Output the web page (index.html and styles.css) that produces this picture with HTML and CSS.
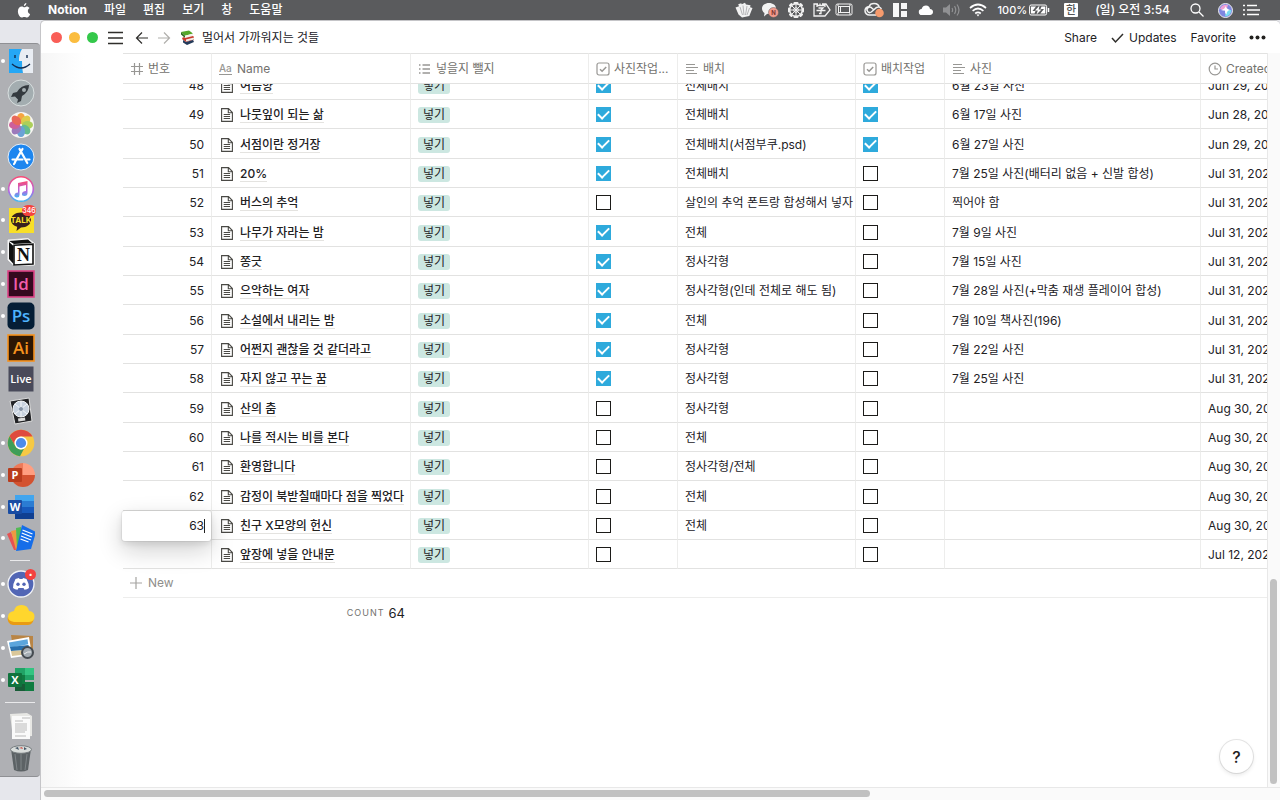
FILE: index.html
```html
<!DOCTYPE html>
<html lang="ko">
<head>
<meta charset="utf-8">
<title>멀어서 가까워지는 것들</title>
<link rel="stylesheet" href="styles.css">
</head>
<body>
<svg class="defs" aria-hidden="true">
  <symbol id="page" viewBox="0 0 12 14"><path d="M.6.6h6.9l3.9 3.9v8.9H.6zM7.3.6v4.1h4.1" fill="none" stroke="#4a4945" stroke-width="1.1"/><path d="M2.700 6.500h6.400M2.700 8.500h6.400M2.700 10.500h6.400" stroke="#4a4945"/></symbol>
  <symbol id="check" viewBox="0 0 14 14"><rect x="1" y="1" width="12" height="12" rx="2" fill="none" stroke="#989794" stroke-width="1.2"/><path d="M4 7.2l2.1 2.1L10.2 5" fill="none" stroke="#989794" stroke-width="1.5"/></symbol>
  <symbol id="lines" viewBox="0 0 14 14"><path d="M1 2.500h9M1 5.500h12M1 8.500h8M1 11.500h11" stroke="#989794" stroke-width="1.2"/></symbol>
</svg>

<header class="menubar">
  <nav class="menus" aria-label="메뉴 막대">
    <svg class="apple" viewBox="0 0 12 14" width="14" height="15"><path fill="#fff" d="M8.2 0c.1 1.3-1 2.7-2.3 2.8C5.700 1.500 7 .2 8.200 0zM8.300 3.200c1.200 0 2.300.600 2.900 1.500-2.400 1.500-1.900 4.700.5 5.700-.6 1.500-1.700 3.200-2.900 3.200-1 0-1.300-.6-2.500-.6s-1.600.6-2.500.6C2.100 13.600.3 10.500.3 7.800c0-2.800 1.800-4.500 3.600-4.500 1.100 0 1.900.7 2.600.7.600 0 1.300-.8 1.800-.8z"/></svg>
    <a class="app" href="#">Notion</a><a href="#">파일</a><a href="#">편집</a><a href="#">보기</a><a href="#">창</a><a href="#">도움말</a>
  </nav>
  <div class="status">
    <span class="slot"><svg width="18" height="16" viewBox="0 0 18 16"><path fill="#f2f2f2" d="M.5 5.500L4 4.300 3.200 2.200l3-1 .6 1L10 .8l1 1.700 4.500.8-.4 1.900 2.400.8-3.200 8L7 15.500l-3.500-3z"/><path d="M5 5l2.500 8M8 3.500l1 9.500M12 4l-1.500 9M14.500 6L12 13" stroke="#8c8c8e" stroke-width=".6"/></svg></span>
    <span class="slot"><svg width="18" height="16" viewBox="0 0 18 16"><path fill="#f2f2f2" d="M8 1c4 0 7 2.300 7 5.500S12 12 8 12c-.6 0-1.200 0-1.700-.2L3 14.500 3.500 11C2 10 1 8.500 1 6.500 1 3.300 4 1 8 1z"/><circle cx="12.500" cy="10.500" r="5" fill="#f19a8c" stroke="#5a5b5d" stroke-width=".5"/><text x="12.500" y="12.700" text-anchor="middle" class="tiny">N</text></svg></span>
    <span class="slot"><svg width="16" height="16" viewBox="0 0 16 16" fill="none" stroke="#f2f2f2"><circle cx="8" cy="8" r="6.300" stroke-width="1.500"/><circle cx="8" cy="8" r="2.300"/><path d="M8 .5v15M.5 8h15M2.700 2.700l10.600 10.600M13.300 2.700L2.700 13.300"/><path stroke-width="2" stroke-linecap="round" d="M6.500 1h3M6.500 15h3M1 6.500v3M15 6.500v3M2 3.500L3.500 2M12.500 2L14 3.500M2 12.500L3.500 14M12.500 14l1.500-1.500"/></svg></span>
    <span class="slot"><svg width="18" height="16" viewBox="0 0 18 16" fill="none" stroke="#f2f2f2" stroke-width="1.300"><path d="M5 2H1v12h11l5-6-4-6H9M4 5V3.500h8V5M7 1.500v2M5.500 6H10L8 8v3.500H6M3.500 8.500h9"/></svg></span>
    <span class="slot early"><svg width="18" height="16" viewBox="0 0 18 16" fill="none" stroke="#f2f2f2"><rect x="1" y="2" width="16" height="11" rx="1.500"/><rect x="3.500" y="4.500" width="11" height="6"/><path d="M5.500 4.500v6M3 2v2M3 11v2M15 2v2M15 11v2"/></svg></span>
    <span class="slot"><svg width="20" height="16" viewBox="0 0 20 16" fill="none" stroke="#f2f2f2" stroke-width="1.500"><path d="M5.500 13a4.300 4.300 0 01-.4-8.600C6 2 8.200 1.500 10 1.500c3 0 5 1.700 5.300 4.200M10 8L7.800 6a2.700 2.700 0 10-.5 4l5-4.300c2-1.500 4.500-.5 5 1.500M5.500 13H12"/><circle cx="15.500" cy="11" r="4.300" fill="#f79b6d" stroke="none"/></svg></span>
    <span class="slot"><svg width="14" height="14" viewBox="0 0 14 14" fill="#f7f7f7"><path d="M0 0h6v14H0zM8 0h6v6H8zM8 8h6v6H8z"/></svg></span>
    <span class="slot"><svg width="16" height="12" viewBox="0 0 16 12"><path fill="#fff" d="M4 11a3 3 0 01-.4-6C4.200 2.500 6 1.500 8 1.500c2.300 0 3.700 1.500 4 3.500 2 .1 3 1.400 3 3s-1.200 3-3 3z"/></svg></span>
    <span class="slot"><svg width="18" height="14" viewBox="0 0 18 14" fill="none" stroke="#909193" stroke-width="1.200"><path d="M0 4.500h3L7 1v12L3 9.500H0z" fill="#909193" stroke="none"/><path d="M9 5q1.200 2 0 4M11.500 3.200q2.500 3.800 0 7.600M14 1.500q4 5.500 0 11"/></svg></span>
    <span class="slot"><svg width="18" height="14" viewBox="0 0 18 14" fill="none" stroke="#fff" stroke-width="1.700"><path d="M1 5q8-7 16 0M3.600 7.800q5.400-4.600 10.800 0M6.200 10.500q2.800-2.300 5.600 0"/><path d="M7.500 11.500L9 13.500l1.500-2z" fill="#fff" stroke="none"/></svg></span>
    <span class="battery">100%<svg width="21" height="12" viewBox="0 0 21 12" fill="none" stroke="#fff"><rect x=".6" y="1" width="17" height="10" rx="1.500"/><path d="M19.500 4v4" stroke-width="1.500"/><path fill="#fff" stroke="none" d="M2 2.500h5L3.500 7h3L5.500 9.500H2zM16.300 9.500h-5L15 5h-3.500l1-2.500h3.800zM10.500 1.500L6 6.500h2.800L7.500 10.500l5-5H9.700z"/></svg></span>
    <span class="ime">한</span>
    <time class="clock">(일) 오전 3:54</time>
    <svg class="search" width="14" height="14" viewBox="0 0 14 14" fill="none" stroke="#fff" stroke-width="1.300"><circle cx="5.500" cy="5.500" r="4.500"/><path d="M9 9l4.500 4.500"/></svg>
    <svg class="siri" width="15" height="15" viewBox="0 0 15 15"><circle cx="7.500" cy="7.500" r="7" fill="#7f86e0" stroke="#eee"/><path fill="#f0a0d4" d="M2 6q2-5 8-4l-2 6z"/><path fill="#7adcf0" d="M13.500 7q-1 6-6.500 6.500L8 7z"/><path fill="#fff" d="M7.500 3q.5 2.500 4.500 4-3.500.8-3.500 4.500-2-1-1.500-4-2 0-4-.5 4-.5 4.500-4z"/></svg>
    <svg width="17" height="12" viewBox="0 0 17 12" stroke="#fff" stroke-width="1.500"><path d="M0 1.500h2M4 1.500h10M0 6h2M4 6h13M0 10.500h2M4 10.500h12"/></svg>
  </div>
</header>

<div class="desktop">
  <aside class="dock" aria-label="Dock">
    <div class="group">
      <span class="dock-item running"><svg viewBox="0 0 28 28"><path fill="#25a7f5" d="M2 2h13q-3 5-3 12h3q0 6 1 12H2z"/><path fill="#e9edf3" d="M15 2h11v24H16q-1-6-1-12h-3q0-7 3-12z"/><path d="M8 8v3M20 8v3M5 17q9 8 18 0" fill="none" stroke="#122b4f" stroke-width="1.400"/></svg></span>
      <span class="dock-item"><svg viewBox="0 0 28 28"><circle cx="14" cy="14" r="13" fill="#a3adb0" stroke="#d8dfdf"/><path fill="#333a3f" d="M22 6q-8 0-12 7l-4 1-2 4 4-.5 3 3L10 24l4-2 1-5q7-4 7-11z"/><circle cx="17" cy="11" r="2" fill="#a3adb0"/></svg></span>
      <span class="dock-item"><svg viewBox="0 0 28 28"><circle cx="14" cy="14" r="13" fill="#f8f6f3"/><g opacity=".88"><ellipse cx="14" cy="7.500" rx="4" ry="5.500" fill="#f69a29"/><ellipse cx="14" cy="7.500" rx="4" ry="5.500" fill="#dcc735" transform="rotate(45 14 14)"/><ellipse cx="14" cy="7.500" rx="4" ry="5.500" fill="#a2ca45" transform="rotate(90 14 14)"/><ellipse cx="14" cy="7.500" rx="4" ry="5.500" fill="#54b580" transform="rotate(135 14 14)"/><ellipse cx="14" cy="7.500" rx="4" ry="5.500" fill="#5797d3" transform="rotate(180 14 14)"/><ellipse cx="14" cy="7.500" rx="4" ry="5.500" fill="#9069b4" transform="rotate(225 14 14)"/><ellipse cx="14" cy="7.500" rx="4" ry="5.500" fill="#c84b8f" transform="rotate(270 14 14)"/><ellipse cx="14" cy="7.500" rx="4" ry="5.500" fill="#e75544" transform="rotate(315 14 14)"/></g></svg></span>
      <span class="dock-item"><svg viewBox="0 0 28 28"><circle cx="14" cy="14" r="13" fill="#1e86ef" stroke="#e6eef6"/><path d="M15.500 6L8 19M12.500 6l7.800 14M5.500 16.500h10M18.500 16.500h4M7 21l1-1.500" stroke="#fff" stroke-width="2.200" stroke-linecap="round"/></svg></span>
      <span class="dock-item running"><svg viewBox="0 0 28 28"><defs><linearGradient id="music" x2="0" y2="1"><stop stop-color="#fa4a75"/><stop offset=".6" stop-color="#b366e2"/><stop offset="1" stop-color="#41b9f2"/></linearGradient></defs><circle cx="14" cy="14" r="12.300" fill="#fff" stroke="url(#music)" stroke-width="1.600"/><path fill="url(#music)" d="M11 8l9.500-2v12q0 3-3 3t-2.500-2.500 4-2.500V10l-6.500 1.500V20q0 2.800-3 2.500-2.700-.5-2-2.700T11 17.500z"/></svg></span>
      <span class="dock-item running"><svg viewBox="0 0 28 28"><rect x="2" y="2" width="25" height="25" fill="#f8df28"/><path fill="#38201f" d="M14 6.500c6 0 10 3.300 10 7.500s-4 7.500-10 7.500L9.500 25l.7-4.200C6.500 19.700 4 17.300 4 14c0-4.200 4-7.500 10-7.500z"/><text x="14" y="16.500" text-anchor="middle" class="talk">TALK</text></svg><b class="badge">346</b></span>
      <span class="dock-item running"><svg viewBox="0 0 28 28"><path fill="#fff" stroke="#eee" d="M1 2l20-1.500 6.500 5V27l-20 1L1 22z"/><path fill="#111" d="M2 3l19-1.500L25 5 7 6zM2 4l4.500 4v18L2 21z"/><path fill="none" stroke="#111" stroke-width="1.600" d="M7 7.200l19-1V26L7 27z"/><text x="16.500" y="22.500" text-anchor="middle" class="notion">N</text></svg></span>
      <span class="dock-item running"><svg viewBox="0 0 28 28"><rect x="1" y="1" width="26" height="26" fill="#34091e" stroke="#dd4386" stroke-width="1.600"/><text x="14" y="19.500" text-anchor="middle" class="adobe" fill="#f25caa">Id</text></svg></span>
      <span class="dock-item running"><svg viewBox="0 0 28 28"><rect x=".5" y=".5" width="27" height="27" rx="5" fill="#051e36"/><text x="14" y="20" text-anchor="middle" class="adobe" fill="#4eb4ff">Ps</text></svg></span>
      <span class="dock-item"><svg viewBox="0 0 28 28"><rect x="1" y="1" width="26" height="26" fill="#2d1604" stroke="#f6921e" stroke-width="1.600"/><text x="14" y="19.500" text-anchor="middle" class="adobe" fill="#f6921e">Ai</text></svg></span>
      <span class="dock-item"><svg viewBox="0 0 28 28"><rect x="1.500" y="1.500" width="25" height="25" fill="#494a5a"/><text x="14" y="18" text-anchor="middle" class="live">Live</text></svg></span>
      <span class="dock-item"><svg viewBox="0 0 28 28"><path fill="#222326" stroke="#dcdcdc" d="M3 4l19-3 3 23-17 3z"/><circle cx="14" cy="12" r="8" fill="#c8d2df" stroke="#f4f6f8"/><path d="M8 7l12 10M20 7L8 17M14 4v16" stroke="#f3f6fa"/><circle cx="14" cy="12" r="2" fill="#8492a4"/><path fill="#ddd" d="M11 21.500l7-1 .4 3-7 1z"/></svg></span>
      <span class="dock-item running"><svg viewBox="0 0 28 28"><circle cx="14" cy="14" r="13.300" fill="#f6c944"/><path fill="#df4b3e" d="M2.500 7.300A13.300 13.300 0 0125.500 7.500H14a6.500 6.500 0 00-5.700 9.700z"/><path fill="#3f9e58" d="M2.500 7.300l5.900 10A6.500 6.500 0 0017 19.700l-4 7.500A13.300 13.300 0 012.500 7.300z"/><circle cx="14" cy="14" r="6.500" fill="#fff"/><circle cx="14" cy="14" r="5.100" fill="#4c8bea"/></svg></span>
      <span class="dock-item running"><svg viewBox="0 0 28 28"><path fill="#d35230" d="M4 14h24a12 12 0 01-24 0z"/><path fill="#ed7a59" d="M16 2A12 12 0 004 14h12z"/><path fill="#ff9e80" d="M16 2a12 12 0 0112 12H16z"/><rect x="1" y="7" width="14" height="14" rx="1" fill="#b93c1d"/><text x="8" y="18" text-anchor="middle" class="office">P</text></svg></span>
      <span class="dock-item running"><svg viewBox="0 0 28 28"><path fill="#41a5ee" d="M8 2h19v6H8z"/><path fill="#2b7cd3" d="M8 8h19v6H8z"/><path fill="#185abd" d="M8 14h19v6H8z"/><path fill="#103f91" d="M8 20h19v6H8z"/><rect x="1" y="7" width="14" height="14" rx="1" fill="#194ca3"/><text x="8" y="18" text-anchor="middle" class="office">W</text></svg></span>
      <span class="dock-item running"><svg viewBox="0 0 28 28"><path fill="#e65252" d="M0 10l4-2 7 18H7z"/><path fill="#ee9a41" d="M4 7l5-1 4 20H9z"/><path fill="#52ba54" d="M9 4l5-1 2 23h-6z"/><path fill="#156de9" d="M15 1l14 7-5 17-15 2z"/><path d="M15.500 6l10 4M14.800 9l10 4M14 12l10 4M13.500 15l8 3" stroke="#fff" stroke-width="1.300"/></svg></span>
    </div>
    <hr class="short">
    <div class="group">
      <span class="dock-item running"><svg viewBox="0 0 28 28"><circle cx="14" cy="14" r="13" fill="#5266b5" stroke="#f1f3f7" stroke-width="1.300"/><path fill="#fff" d="M8.500 9l3.500-1 .5 1h3l.5-1 3.500 1q2.500 4.500 2.500 9-2 1.700-4.500 1.800l-1-1.800h-5l-1 1.800Q8 19.700 6 18q0-4.500 2.500-9z"/><circle cx="11" cy="14.300" r="1.700" fill="#5266b5"/><circle cx="17" cy="14.300" r="1.700" fill="#5266b5"/></svg><b class="badge dot">•</b></span>
      <span class="dock-item running"><svg viewBox="0 0 28 28"><path fill="#e99b13" d="M6 23a6 6 0 01-5-8l26 1q-1 7-6 7z"/><path fill="#ffd62d" d="M7 20q-6-1-6-5.500T7 9q1-6 7.500-6T22 9q5.500.5 5.500 5.500T22 20z"/></svg></span>
      <span class="dock-item running"><svg viewBox="0 0 28 28"><path fill="#b98545" d="M4 1l22 1v20H7z"/><path fill="#fff" d="M0 7l22-4 3 18-21 3z"/><path fill="#5ba5dc" d="M2 8.500l18.500-3.300.7 5L3 14z"/><path fill="#286fac" d="M3 13l18.500-2 .8 5L4 17z"/><path fill="#dac799" d="M4 17l18-1 .5 4L5 22z"/><circle cx="20.500" cy="18.500" r="5.500" fill="#a5adb4" stroke="#454b51" stroke-width="2"/><path d="M17 20q4-3 7-2" stroke="#eee" fill="none"/></svg></span>
      <span class="dock-item running"><svg viewBox="0 0 28 28"><path fill="#21a366" d="M8 2h19v12H8z"/><path fill="#33c481" d="M18 2h9v7h-9z"/><path fill="#107c41" d="M8 9h10v7h9v9H8z"/><path fill="#185c37" d="M8 18h10v7H8z"/><rect x="1" y="7" width="14" height="14" rx="1" fill="#10733d"/><text x="8" y="18" text-anchor="middle" class="office">X</text></svg></span>
    </div>
    <hr>
    <div class="group">
      <span class="dock-item"><svg viewBox="0 0 28 28"><path fill="#e7e7e4" d="M3 2l17-1 5 3v20l-19 2z"/><path fill="#fafafa" d="M5 4h18v23H5z"/><path d="M15 6h8M8 9h8M8 12h12M8 14h12M8 16h12M8 18h12M8 20h10M8 24h11" stroke="#aaa" stroke-width=".8"/></svg></span>
      <span class="dock-item"><svg viewBox="0 0 28 28"><path fill="#5c6265" d="M4 5h20l-3 21q-7 3-14 0z"/><path fill="#3e4346" d="M8 10l2 16M14 10v16M20 10l-2 16" stroke="#7f8588"/><ellipse cx="14" cy="5.500" rx="10.500" ry="3.800" fill="#d9dddb" stroke="#777d80"/><path fill="#456" d="M8 4l3-1 1 3zM17 3l3 2-3 1z"/><path fill="#ca5950" d="M12 4l3-1 1 2z"/></svg></span>
    </div>
  </aside>

  <main class="window">
    <div class="toolbar">
      <div class="lights"><button aria-label="닫기"></button><button aria-label="최소화"></button><button aria-label="확대"></button></div>
      <button class="plain" aria-label="메뉴"><svg width="16" height="14" viewBox="0 0 16 14" stroke="#2f2e2b" stroke-width="1.300"><path d="M0 1.500h15M0 7h15M0 12.500h15"/></svg></button>
      <div class="arrows">
        <button class="plain" aria-label="뒤로"><svg width="14" height="14" viewBox="0 0 14 14" fill="none" stroke="#2f2e2b" stroke-width="1.200"><path d="M13 7H1.500M7 1.500L1.500 7 7 12.500"/></svg></button>
        <button class="plain" aria-label="앞으로"><svg width="14" height="14" viewBox="0 0 14 14" fill="none" stroke="#b0afac" stroke-width="1.200"><path d="M1 7h11.500M7 1.500L12.500 7 7 12.500"/></svg></button>
      </div>
      <a class="crumb" href="#"><svg width="15" height="15" viewBox="0 0 15 15"><path fill="#56a72a" d="M1 2l8-1.500 4 3-8 2.200z"/><path fill="#f3f3ec" d="M5 5.700l8-2V6L5 8z"/><path fill="#2e6c20" d="M1 2l4 3.700V8L1 4.500z"/><path fill="#c93a2e" d="M3 7l2 1 8-2 1 1v3l-8 2-4-3z"/><path fill="#f2eee7" d="M6 9.500l8-2v2l-8 2z"/><path fill="#243a5a" d="M3 10l3 2 7-2 1 2-7 3-4-2.500z"/></svg>멀어서 가까워지는 것들</a>
      <div class="actions">
        <button class="plain">Share</button>
        <button class="plain updates"><svg width="13" height="12" viewBox="0 0 13 12" fill="none" stroke="#2f2e2b" stroke-width="1.500"><path d="M1 6l3.500 4L12 2"/></svg>Updates</button>
        <button class="plain">Favorite</button>
        <button class="plain" aria-label="더 보기"><svg width="17" height="5" viewBox="0 0 17 5" fill="#22211f"><circle cx="2.500" cy="2.500" r="2"/><circle cx="8.500" cy="2.500" r="2"/><circle cx="14.500" cy="2.500" r="2"/></svg></button>
      </div>
    </div>

    <div class="body">
      <div class="content">
        <table>
          <colgroup><col class="w-s"><col class="w-name"><col class="w-m"><col class="w-s"><col class="w-m"><col class="w-s"><col class="w-l"><col class="w-m"></colgroup>
          <thead><tr>
            <th><div class="head"><svg viewBox="0 0 14 14"><path d="M4.500 1v12M9.500 1v12M1 4.500h12M1 9.500h12" stroke="#989794" stroke-width="1.200"/></svg>번호</div></th>
            <th><div class="head"><svg viewBox="0 0 14 14"><text x="0" y="10" class="aa">Aa</text><path d="M0 12.500h13" stroke="#989794"/></svg>Name</div></th>
            <th><div class="head"><svg viewBox="0 0 14 14"><path d="M1 3h1.500M1 7h1.500M1 11h1.500M4.500 3H12M4.500 7H12M4.500 11H12" stroke="#989794" stroke-width="1.300"/></svg>넣을지 뺄지</div></th>
            <th><div class="head"><svg><use href="#check"/></svg>사진작업...</div></th>
            <th><div class="head"><svg><use href="#lines"/></svg>배치</div></th>
            <th><div class="head"><svg><use href="#check"/></svg>배치작업</div></th>
            <th><div class="head"><svg><use href="#lines"/></svg>사진</div></th>
            <th><div class="head"><svg viewBox="0 0 14 14" fill="none" stroke="#989794" stroke-width="1.200"><circle cx="7" cy="7" r="5.800"/><path d="M7 3.500V7h3"/></svg>Created</div></th>
          </tr></thead>
          <tbody>
            <tr class="clipped"><td><div class="cell num">48</div></td><td><div class="cell name"><svg><use href="#page"/></svg><a href="#">여름향</a></div></td><td><div class="cell"><span class="tag">넣기</span></div></td><td><div class="cell"><input type="checkbox" aria-label="사진작업 48" checked></div></td><td><div class="cell">전체배치</div></td><td><div class="cell"><input type="checkbox" aria-label="배치작업 48" checked></div></td><td><div class="cell">6월 23일 사진</div></td><td><div class="cell">Jun 29, 2020</div></td></tr>
            <tr><td><div class="cell num">49</div></td><td><div class="cell name"><svg><use href="#page"/></svg><a href="#">나뭇잎이 되는 삶</a></div></td><td><div class="cell"><span class="tag">넣기</span></div></td><td><div class="cell"><input type="checkbox" aria-label="사진작업 49" checked></div></td><td><div class="cell">전체배치</div></td><td><div class="cell"><input type="checkbox" aria-label="배치작업 49" checked></div></td><td><div class="cell">6월 17일 사진</div></td><td><div class="cell">Jun 28, 2020</div></td></tr>
            <tr><td><div class="cell num">50</div></td><td><div class="cell name"><svg><use href="#page"/></svg><a href="#">서점이란 정거장</a></div></td><td><div class="cell"><span class="tag">넣기</span></div></td><td><div class="cell"><input type="checkbox" aria-label="사진작업 50" checked></div></td><td><div class="cell">전체배치(서점부쿠.psd)</div></td><td><div class="cell"><input type="checkbox" aria-label="배치작업 50" checked></div></td><td><div class="cell">6월 27일 사진</div></td><td><div class="cell">Jun 29, 2020</div></td></tr>
            <tr><td><div class="cell num">51</div></td><td><div class="cell name"><svg><use href="#page"/></svg><a href="#">20%</a></div></td><td><div class="cell"><span class="tag">넣기</span></div></td><td><div class="cell"><input type="checkbox" aria-label="사진작업 51" checked></div></td><td><div class="cell">전체배치</div></td><td><div class="cell"><input type="checkbox" aria-label="배치작업 51"></div></td><td><div class="cell">7월 25일 사진(배터리 없음 + 신발 합성)</div></td><td><div class="cell">Jul 31, 2020</div></td></tr>
            <tr><td><div class="cell num">52</div></td><td><div class="cell name"><svg><use href="#page"/></svg><a href="#">버스의 추억</a></div></td><td><div class="cell"><span class="tag">넣기</span></div></td><td><div class="cell"><input type="checkbox" aria-label="사진작업 52"></div></td><td><div class="cell">살인의 추억 폰트랑 합성해서 넣자</div></td><td><div class="cell"><input type="checkbox" aria-label="배치작업 52"></div></td><td><div class="cell">찍어야 함</div></td><td><div class="cell">Jul 31, 2020</div></td></tr>
            <tr><td><div class="cell num">53</div></td><td><div class="cell name"><svg><use href="#page"/></svg><a href="#">나무가 자라는 밤</a></div></td><td><div class="cell"><span class="tag">넣기</span></div></td><td><div class="cell"><input type="checkbox" aria-label="사진작업 53" checked></div></td><td><div class="cell">전체</div></td><td><div class="cell"><input type="checkbox" aria-label="배치작업 53"></div></td><td><div class="cell">7월 9일 사진</div></td><td><div class="cell">Jul 31, 2020</div></td></tr>
            <tr><td><div class="cell num">54</div></td><td><div class="cell name"><svg><use href="#page"/></svg><a href="#">쫑긋</a></div></td><td><div class="cell"><span class="tag">넣기</span></div></td><td><div class="cell"><input type="checkbox" aria-label="사진작업 54" checked></div></td><td><div class="cell">정사각형</div></td><td><div class="cell"><input type="checkbox" aria-label="배치작업 54"></div></td><td><div class="cell">7월 15일 사진</div></td><td><div class="cell">Jul 31, 2020</div></td></tr>
            <tr><td><div class="cell num">55</div></td><td><div class="cell name"><svg><use href="#page"/></svg><a href="#">으악하는 여자</a></div></td><td><div class="cell"><span class="tag">넣기</span></div></td><td><div class="cell"><input type="checkbox" aria-label="사진작업 55" checked></div></td><td><div class="cell">정사각형(인데 전체로 해도 됨)</div></td><td><div class="cell"><input type="checkbox" aria-label="배치작업 55"></div></td><td><div class="cell">7월 28일 사진(+막춤 재생 플레이어 합성)</div></td><td><div class="cell">Jul 31, 2020</div></td></tr>
            <tr><td><div class="cell num">56</div></td><td><div class="cell name"><svg><use href="#page"/></svg><a href="#">소설에서 내리는 밤</a></div></td><td><div class="cell"><span class="tag">넣기</span></div></td><td><div class="cell"><input type="checkbox" aria-label="사진작업 56" checked></div></td><td><div class="cell">전체</div></td><td><div class="cell"><input type="checkbox" aria-label="배치작업 56"></div></td><td><div class="cell">7월 10일 책사진(196)</div></td><td><div class="cell">Jul 31, 2020</div></td></tr>
            <tr><td><div class="cell num">57</div></td><td><div class="cell name"><svg><use href="#page"/></svg><a href="#">어쩐지 괜찮을 것 같더라고</a></div></td><td><div class="cell"><span class="tag">넣기</span></div></td><td><div class="cell"><input type="checkbox" aria-label="사진작업 57" checked></div></td><td><div class="cell">정사각형</div></td><td><div class="cell"><input type="checkbox" aria-label="배치작업 57"></div></td><td><div class="cell">7월 22일 사진</div></td><td><div class="cell">Jul 31, 2020</div></td></tr>
            <tr><td><div class="cell num">58</div></td><td><div class="cell name"><svg><use href="#page"/></svg><a href="#">자지 않고 꾸는 꿈</a></div></td><td><div class="cell"><span class="tag">넣기</span></div></td><td><div class="cell"><input type="checkbox" aria-label="사진작업 58" checked></div></td><td><div class="cell">정사각형</div></td><td><div class="cell"><input type="checkbox" aria-label="배치작업 58"></div></td><td><div class="cell">7월 25일 사진</div></td><td><div class="cell">Jul 31, 2020</div></td></tr>
            <tr><td><div class="cell num">59</div></td><td><div class="cell name"><svg><use href="#page"/></svg><a href="#">산의 춤</a></div></td><td><div class="cell"><span class="tag">넣기</span></div></td><td><div class="cell"><input type="checkbox" aria-label="사진작업 59"></div></td><td><div class="cell">정사각형</div></td><td><div class="cell"><input type="checkbox" aria-label="배치작업 59"></div></td><td></td><td><div class="cell">Aug 30, 2020</div></td></tr>
            <tr><td><div class="cell num">60</div></td><td><div class="cell name"><svg><use href="#page"/></svg><a href="#">나를 적시는 비를 본다</a></div></td><td><div class="cell"><span class="tag">넣기</span></div></td><td><div class="cell"><input type="checkbox" aria-label="사진작업 60"></div></td><td><div class="cell">전체</div></td><td><div class="cell"><input type="checkbox" aria-label="배치작업 60"></div></td><td></td><td><div class="cell">Aug 30, 2020</div></td></tr>
            <tr><td><div class="cell num">61</div></td><td><div class="cell name"><svg><use href="#page"/></svg><a href="#">환영합니다</a></div></td><td><div class="cell"><span class="tag">넣기</span></div></td><td><div class="cell"><input type="checkbox" aria-label="사진작업 61"></div></td><td><div class="cell">정사각형/전체</div></td><td><div class="cell"><input type="checkbox" aria-label="배치작업 61"></div></td><td></td><td><div class="cell">Aug 30, 2020</div></td></tr>
            <tr><td><div class="cell num">62</div></td><td><div class="cell name"><svg><use href="#page"/></svg><a href="#">감정이 북받칠때마다 점을 찍었다</a></div></td><td><div class="cell"><span class="tag">넣기</span></div></td><td><div class="cell"><input type="checkbox" aria-label="사진작업 62"></div></td><td><div class="cell">전체</div></td><td><div class="cell"><input type="checkbox" aria-label="배치작업 62"></div></td><td></td><td><div class="cell">Aug 30, 2020</div></td></tr>
            <tr><td class="editing"><div class="editor"><input type="text" value="63" aria-label="번호"><span class="caret"></span></div></td><td><div class="cell name"><svg><use href="#page"/></svg><a href="#">친구 X모양의 헌신</a></div></td><td><div class="cell"><span class="tag">넣기</span></div></td><td><div class="cell"><input type="checkbox" aria-label="사진작업 63"></div></td><td><div class="cell">전체</div></td><td><div class="cell"><input type="checkbox" aria-label="배치작업 63"></div></td><td></td><td><div class="cell">Aug 30, 2020</div></td></tr>
            <tr><td></td><td><div class="cell name"><svg><use href="#page"/></svg><a href="#">앞장에 넣을 안내문</a></div></td><td><div class="cell"><span class="tag">넣기</span></div></td><td><div class="cell"><input type="checkbox" aria-label="사진작업 안내문"></div></td><td></td><td><div class="cell"><input type="checkbox" aria-label="배치작업 안내문"></div></td><td></td><td><div class="cell">Jul 12, 2020</div></td></tr>
          </tbody>
        </table>
        <button class="new"><svg width="12" height="12" viewBox="0 0 12 12" stroke="#a5a4a1" stroke-width="1.200"><path d="M6 0v12M0 6h12"/></svg>New</button>
        <div class="count"><span>COUNT</span><b>64</b></div>
        <button class="help" aria-label="도움말">?</button>
      </div>
      <div class="track-v"><div class="thumb"></div></div>
      <div class="track-h"><div class="thumb"></div></div>
    </div>
  </main>
</div>
</body>
</html>
```
FILE: styles.css
```css
* { box-sizing: border-box; }
body {
  margin: 0;
  height: 100vh;
  display: flex;
  flex-direction: column;
  overflow: hidden;
  background: #e6e7ec;
  color: #22211f;
  font: 12px/16px Inter, "Noto Sans CJK KR", sans-serif;
}
a { color: inherit; text-decoration: none; }
svg { flex: none; display: block; }
button { font: inherit; color: inherit; }
.defs { position: absolute; width: 0; height: 0; }

/* menu bar */
.menubar {
  display: flex;
  justify-content: space-between;
  align-items: center;
  height: 20px;
  flex: none;
  background: #5a5b5d;
  color: #fff;
  font-weight: 500;
}
.menus { display: flex; align-items: center; gap: 17px; padding-left: 17px; }
.app { font-weight: 700; }
.status { display: flex; align-items: center; padding-right: 20px; }
.slot { width: 26px; display: flex; justify-content: center; }
.slot.early { justify-content: flex-start; }
.battery { display: flex; align-items: center; gap: 2px; margin-left: 6px; font-size: 11px; }
.ime {
  width: 14px;
  margin-left: 14px;
  border-radius: 1px;
  background: #fff;
  color: #555;
  font-size: 11px;
  line-height: 14px;
  text-align: center;
}
.clock { margin: 0 20px 0 17px; }
.siri { margin: 0 10px 0 14px; }
.tiny { font: 700 6px Inter, sans-serif; fill: #7c3430; stroke: none; }

/* dock */
.desktop { flex: 1; min-height: 0; display: flex; }
.dock {
  width: 40px;
  flex: none;
  align-self: flex-start;
  margin-top: 23px;
  padding: 1px 0 2px;
  border: 1px solid #8f9094;
  border-left: 0;
  border-right: 0;
  border-radius: 0 4px 4px 0;
  background: #afb0b4;
}
.dock hr { width: 30px; margin: 6px 5px 7px; border: 0; border-top: 1px solid #e9e9eb; }
.dock .short { width: 20px; margin-left: 10px; }
.dock-item { position: relative; display: flex; align-items: center; justify-content: center; height: 32px; padding-left: 2px; }
.dock-item:nth-child(5n) { height: 31px; }
.dock-item svg { width: 28px; height: 28px; }
.running::before {
  content: "";
  position: absolute;
  left: 1px;
  top: 14px;
  width: 4px;
  height: 4px;
  border-radius: 50%;
  background: #fff;
}
.badge {
  position: absolute;
  right: 4px;
  top: 1px;
  width: 14px;
  height: 11px;
  border-radius: 6px;
  background: #f4423f;
  color: #fff;
  font-size: 7px;
  font-weight: 500;
  line-height: 11px;
  text-align: center;
}
.badge.dot { width: 11px; }
.talk { font: 700 8px Inter, sans-serif; fill: #f8df28; }
.notion { font: 700 18px "Liberation Serif", serif; fill: #111; }
.adobe { font: 600 17px "Open Sans", sans-serif; }
.live { font: 600 11px "Open Sans", sans-serif; fill: #fff; }
.office { font: 700 11px "Open Sans", sans-serif; fill: #fff; }

/* window */
.window {
  flex: 1;
  min-width: 0;
  display: flex;
  flex-direction: column;
  border: 1px solid #c5c5c8;
  border-right: 0;
  border-bottom: 0;
  border-radius: 5px 5px 0 0;
  background: linear-gradient(to right, #f6f6f6, #fff 44px);
}
.toolbar { display: flex; align-items: center; height: 32px; flex: none; padding: 1px 14px 0 10px; background: #fff; border-radius: 5px 5px 0 0; }
.lights { display: flex; gap: 7px; }
.lights button { width: 11px; height: 11px; padding: 0; border: 0; border-radius: 50%; background: #f95e57; }
.lights button:nth-child(2) { background: #fbbd3f; }
.lights button:nth-child(3) { background: #34c84a; }
.plain { padding: 0; border: 0; background: none; }
.lights + .plain { margin: 0 11px 0 10px; }
.arrows { display: flex; gap: 8px; }
.crumb { display: flex; align-items: center; gap: 7px; margin-left: 9px; }
.actions { display: flex; align-items: center; gap: 14px; margin-left: auto; }
.updates { display: flex; align-items: center; gap: 5px; }
.actions .plain:last-child { margin-left: -1px; }

.body { flex: 1; min-height: 0; display: grid; grid-template: minmax(0, 1fr) 13px / minmax(0, 1fr) 13px; }
.content { position: relative; overflow: hidden; padding-left: 82px; }

/* table */
table { width: 1256px; table-layout: fixed; border-collapse: separate; border-spacing: 0; }
.w-s { width: 89px; }
.w-name { width: 199px; }
.w-m { width: 178px; }
.w-l { width: 256px; }
th, td { padding: 0; border-right: 1px solid #ededec; border-bottom: 1px solid #e2e2e1; text-align: left; font-weight: 400; white-space: nowrap; }
th { border-top: 1px solid #e2e2e1; color: #73726e; }
.head { display: flex; align-items: center; gap: 4px; height: 29px; padding-left: 7px; overflow: hidden; }
.head svg { width: 14px; height: 14px; }
.aa { font: 500 10px Inter, sans-serif; fill: #989794; }
.cell { display: flex; align-items: center; height: 28px; padding: 2px 7px 0; overflow: hidden; }
tbody tr:nth-child(3n) .cell { height: 29px; }
.clipped .cell { margin-top: -13px; clip-path: inset(13px 0 0 0); }
.num { justify-content: flex-end; }
.name { padding-left: 9px; gap: 7px; font-weight: 500; }
.name svg { width: 12px; height: 14px; }
.name a { line-height: 15px; border-bottom: 1px solid #e4e3e0; }
.tag { padding: 0 5px; border-radius: 3px; background: #cce7e1; }
input[type="checkbox"] {
  appearance: none;
  display: grid;
  place-items: center;
  width: 15px;
  height: 15px;
  margin: 0 0 1px;
  border: 1px solid #1c1b19;
}
input[type="checkbox"]:checked { border-color: #2eaadc; background: #2eaadc; }
input[type="checkbox"]:checked::after {
  content: "";
  width: 9px;
  height: 5px;
  margin-bottom: 3px;
  border: solid #fff;
  border-width: 0 0 2px 2px;
  transform: rotate(-45deg);
}
.editing { position: relative; }
.editor {
  position: absolute;
  z-index: 1;
  inset: 0 0 -2px -1px;
  display: flex;
  align-items: center;
  padding-right: 6px;
  border-radius: 3px;
  background: #fff;
  box-shadow: 0 0 0 1px rgba(15, 15, 15, .05), 0 3px 6px rgba(15, 15, 15, .1), 0 9px 24px rgba(15, 15, 15, .2);
}
.editor input { flex: 1; min-width: 0; padding: 0; border: 0; background: none; font: inherit; color: inherit; text-align: right; }
.caret { width: 1px; height: 14px; background: #22211f; }

.new {
  display: flex;
  align-items: center;
  gap: 6px;
  width: 100%;
  height: 29px;
  padding: 0 7px;
  border: 0;
  border-bottom: 1px solid #ededec;
  background: none;
  color: #8f8e8b;
}
.count { display: flex; align-items: center; justify-content: flex-end; gap: 4px; width: 288px; height: 29px; padding-right: 6px; }
.count span { font-size: 9px; letter-spacing: 1px; color: #73726e; }
.count b { font-size: 13px; font-weight: 400; }
.help {
  position: absolute;
  right: 14px;
  bottom: 14px;
  width: 33px;
  height: 33px;
  padding: 0;
  border: 0;
  border-radius: 50%;
  background: #fff;
  box-shadow: 0 0 0 1px rgba(15, 15, 15, .1), 0 2px 4px rgba(15, 15, 15, .1);
  font-size: 16px;
  font-weight: 500;
}

/* scroll bars */
.track-v { padding: 0 2px 3px; border-left: 1px solid #e8e8e8; background: #fafafa; display: flex; align-items: flex-end; }
.track-v .thumb { width: 7px; height: 28%; border-radius: 4px; background: #c1c1c1; }
.track-h { grid-column: 1 / -1; padding: 2px 3px; border-top: 1px solid #e8e8e8; background: #fafafa; }
.track-h .thumb { width: 67%; height: 7px; border-radius: 4px; background: #c1c1c1; }
```
